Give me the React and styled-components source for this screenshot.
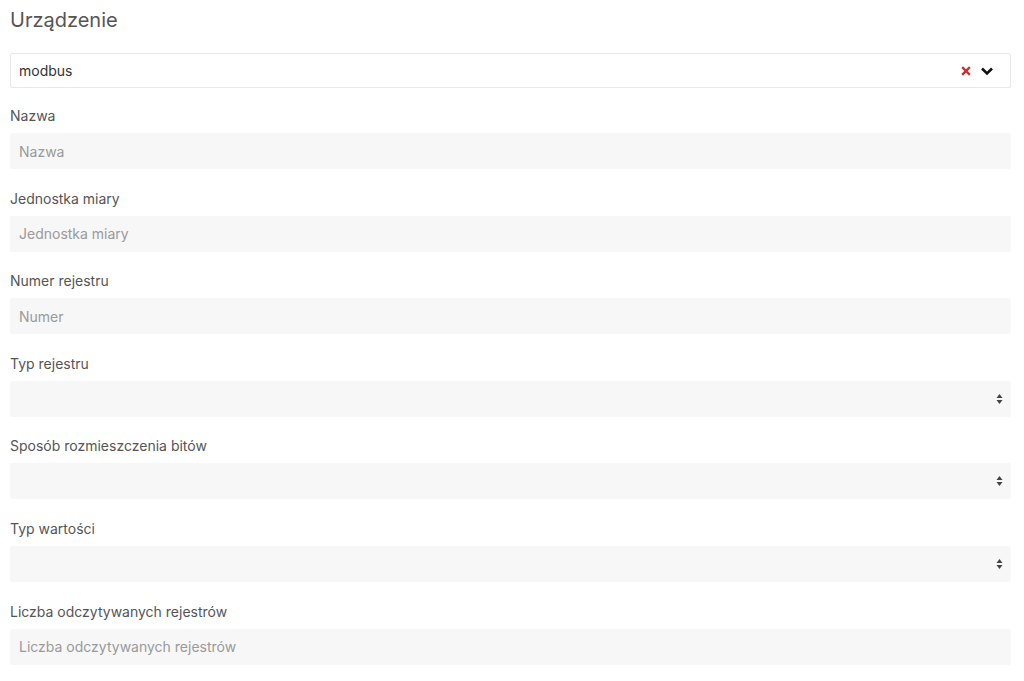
import styled, { createGlobalStyle } from 'styled-components'

const GlobalStyle = createGlobalStyle`
  html, body {
    margin: 0;
    padding: 0;
    background: #ffffff;
    font-family: Inter, 'Noto Sans', sans-serif;
  }
`

const Page = styled.div`
  padding: 8px 13px 0 10px;
  display: flex;
  flex-direction: column;
`

const Heading = styled.h2`
  margin: 0 0 21px;
  font-size: 20px;
  font-weight: 400;
  line-height: 24px;
  color: #555555;
`

const DeviceSelect = styled.div`
  height: 35px;
  box-sizing: border-box;
  border: 1px solid #e8e8e8;
  border-radius: 2px;
  display: flex;
  align-items: center;
  padding: 0 16px 0 8px;
  margin-bottom: 18px;
`

const DeviceValue = styled.span`
  flex: 1;
  font-size: 14px;
  color: #333333;
`

const Indicators = styled.div`
  display: flex;
  align-items: center;
  gap: 9px;
`

const Field = styled.div`
  display: flex;
  flex-direction: column;
  margin-bottom: 19.6px;
`

const Label = styled.label`
  font-size: 14px;
  line-height: 20px;
  color: #555555;
  margin-bottom: 7px;
`

const Input = styled.input`
  height: 36px;
  box-sizing: border-box;
  border: none;
  border-radius: 2px;
  background: #f7f7f7;
  padding: 0 9px;
  font-family: Inter, 'Noto Sans', sans-serif;
  font-size: 14px;
  color: #333333;
  outline: none;
  &::placeholder {
    color: #9a9a9a;
  }
`

const SelectBox = styled.div`
  height: 36px;
  box-sizing: border-box;
  border-radius: 2px;
  background: #f7f7f7;
  display: flex;
  align-items: center;
  justify-content: flex-end;
  padding-right: 8px;
`

const ClearIcon = () => (
  <svg width="10" height="10" viewBox="0 0 10 10">
    <path d="M2 2 L8 8 M8 2 L2 8" stroke="#c9302c" strokeWidth="2.4" strokeLinecap="square" />
  </svg>
)

const ChevronIcon = () => (
  <svg width="14" height="10" viewBox="0 0 14 10">
    <path d="M2 2.5 L7 7.5 L12 2.5" fill="none" stroke="#111111" strokeWidth="2.6" />
  </svg>
)

const SortIcon = () => (
  <svg width="7" height="12" viewBox="0 0 7 12">
    <path d="M3.5 1 L6.5 5 L0.5 5 Z M3.5 11 L6.5 7 L0.5 7 Z" fill="#444444" />
  </svg>
)

const fields = [
  { label: 'Nazwa', placeholder: 'Nazwa' },
  { label: 'Jednostka miary', placeholder: 'Jednostka miary' },
  { label: 'Numer rejestru', placeholder: 'Numer' },
  { label: 'Typ rejestru', select: true },
  { label: 'Sposób rozmieszczenia bitów', select: true },
  { label: 'Typ wartości', select: true },
  { label: 'Liczba odczytywanych rejestrów', placeholder: 'Liczba odczytywanych rejestrów' },
]

export default function App() {
  return (
    <Page>
      <GlobalStyle />
      <Heading>Urządzenie</Heading>
      <DeviceSelect>
        <DeviceValue>modbus</DeviceValue>
        <Indicators>
          <ClearIcon />
          <ChevronIcon />
        </Indicators>
      </DeviceSelect>
      {fields.map((f) => (
        <Field key={f.label}>
          <Label>{f.label}</Label>
          {f.select ? (
            <SelectBox>
              <SortIcon />
            </SelectBox>
          ) : (
            <Input placeholder={f.placeholder} />
          )}
        </Field>
      ))}
    </Page>
  )
}
